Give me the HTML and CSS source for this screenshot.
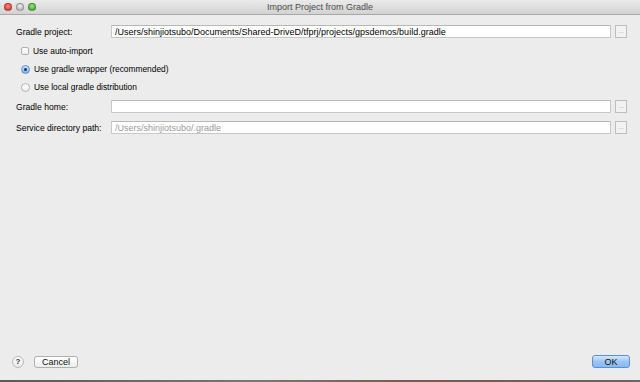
FILE: index.html
```html
<!DOCTYPE html>
<html lang="en">
<head>
  <meta charset="UTF-8">
  <title>Import Project from Gradle</title>
  <link rel="stylesheet" href="styles.css">
</head>
<body>
  <div class="window">
    <div class="titlebar">
      <div class="lights">
        <span class="light red"></span>
        <span class="light grey"></span>
        <span class="light green"></span>
      </div>
      <div class="title">Import Project from Gradle</div>
    </div>

    <div class="content">
      <div class="row first">
        <label class="label">Gradle project:</label>
        <div class="field">/Users/shinjiotsubo/Documents/Shared-DriveD/tfprj/projects/gpsdemos/build.gradle</div>
        <button class="browse">...</button>
      </div>

      <div class="opts">
        <div class="opt"><span class="check"></span>Use auto-import</div>
        <div class="opt"><span class="radio on"></span>Use gradle wrapper (recommended)</div>
        <div class="opt"><span class="radio"></span>Use local gradle distribution</div>
      </div>

      <div class="row">
        <label class="label">Gradle home:</label>
        <div class="field"></div>
        <button class="browse">...</button>
      </div>
      <div class="row">
        <label class="label">Service directory path:</label>
        <div class="field hint">/Users/shinjiotsubo/.gradle</div>
        <button class="browse">...</button>
      </div>
    </div>

    <div class="footer">
      <span class="help">?</span>
      <button class="btn">Cancel</button>
      <div class="spacer"></div>
      <button class="btn ok">OK</button>
    </div>
  </div>
  <div class="desktop"></div>
</body>
</html>
```

FILE: styles.css
```css
html, body { margin: 0; padding: 0; }
body { font-family: "Liberation Sans", Arial, sans-serif; font-size: 9px; color: #000; background: #ececec; width: 640px; height: 382px; overflow: hidden; display: flex; flex-direction: column; }
.window { flex: 1; display: flex; flex-direction: column; background: #ececec; }

.titlebar { height: 14px; display: flex; align-items: center; position: relative; background: linear-gradient(#ebebeb, #d2d2d2); border-bottom: 1px solid #a8a8a8; }
.lights { display: flex; gap: 4px; padding-left: 4px; }
.light { width: 8px; height: 8px; border-radius: 50%; box-sizing: border-box; border: 1px solid rgba(0,0,0,0.25); }
.red { background: radial-gradient(circle at 50% 35%, #ff8a80, #e0443a 70%); }
.grey { background: radial-gradient(circle at 50% 35%, #f2f2f2, #bdbdbd 70%); }
.green { background: radial-gradient(circle at 50% 35%, #a6e58a, #4fb23a 70%); }
.title { position: absolute; left: 0; right: 0; text-align: center; color: #4a4a4a; font-size: 9px; }

.content { padding: 9px 13px 0 16px; }
.row { display: flex; align-items: center; height: 15px; margin-bottom: 6px; }
.row.first { margin-bottom: 3px; }
.label { width: 95px; flex: none; font-size: 8.6px; }
.field { flex: 1; height: 13px; line-height: 13px; box-sizing: border-box; background: #fff; border: 1px solid #c8c8c8; border-top-color: #b8b8b8; padding-left: 3px; white-space: nowrap; overflow: hidden; }
.hint { color: #9a9a9a; }
.browse { width: 12px; height: 13px; margin-left: 4px; padding: 0; box-sizing: border-box; border: 1px solid #bdbdbd; background: #f2f2f2; color: #888; font-size: 6px; line-height: 9px; font-family: inherit; }

.opts { padding: 0 0 3px 5px; font-size: 8.4px; }
.opt { display: flex; align-items: center; height: 18px; }
.check { width: 8px; height: 8px; box-sizing: border-box; border: 1px solid #b0b0b0; border-radius: 2px; background: linear-gradient(#fff, #f0f0f0); margin-right: 4px; }
.radio { width: 9px; height: 9px; box-sizing: border-box; border: 1px solid #b0b0b0; border-radius: 50%; background: linear-gradient(#fff, #eee); margin-right: 4px; display: flex; align-items: center; justify-content: center; }
.radio.on { border-color: #5c8ed0; background: linear-gradient(#cfe2fa, #7cb0ee); }
.radio.on::after { content: ""; width: 3px; height: 3px; border-radius: 50%; background: #1d3557; }

.footer { margin-top: auto; display: flex; align-items: center; padding: 0 10px 12px 12px; }
.help { width: 12px; height: 12px; box-sizing: border-box; border: 1px solid #b8b8b8; border-radius: 50%; background: linear-gradient(#fff, #e8e8e8); font-size: 8px; font-weight: bold; text-align: center; line-height: 10px; color: #333; }
.btn { height: 12px; padding: 0; box-sizing: border-box; border: 1px solid #b0b0b0; border-radius: 3px; background: linear-gradient(#fff, #ededed); font-family: inherit; font-size: 9px; line-height: 10px; color: #111; }
.help + .btn { width: 44px; margin-left: 10px; }
.spacer { flex: 1; }
.ok { width: 38px; height: 13px; border-color: #5a8fd6; background: linear-gradient(#d6e8fc, #9cc6f4 50%, #88b8f0); }

.desktop { height: 2px; background: linear-gradient(90deg, #5a5a5a, #777 40%, #7a5a4a 65%, #666); }
```
